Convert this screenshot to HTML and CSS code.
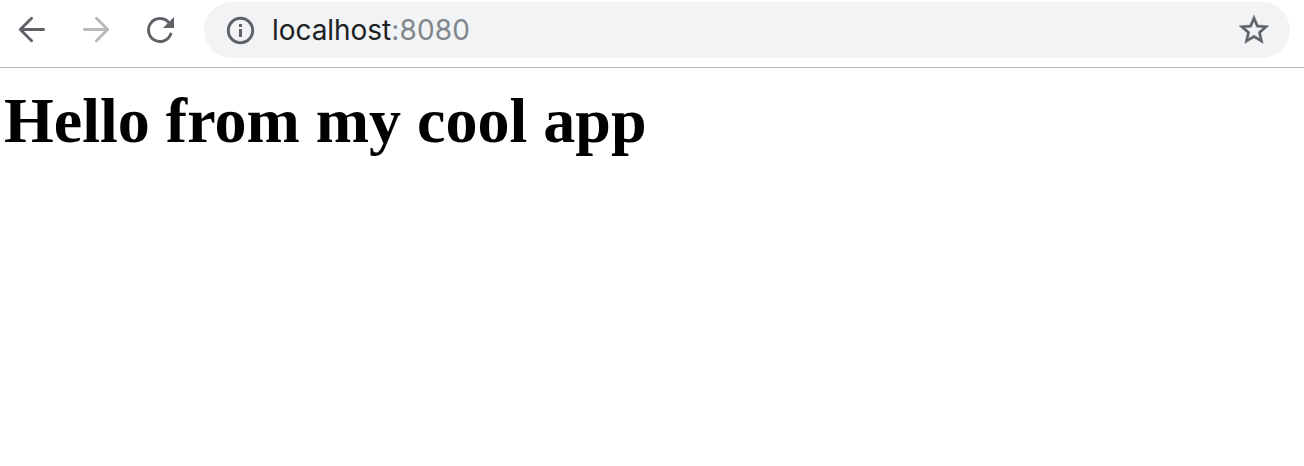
FILE: index.html
```html
<!DOCTYPE html>
<html lang="en">
<head>
<meta charset="utf-8">
<title>localhost:8080</title>
<link rel="stylesheet" href="styles.css">
</head>
<body>
<header class="toolbar">
  <nav class="nav">
    <svg class="icon" viewBox="0 0 32 32"><path class="line" d="M27.6 15.5H4.5M15.6 4.2L4.3 15.5 15.6 26.8"/></svg>
    <svg class="icon disabled" viewBox="0 0 32 32"><path class="line" d="M4.4 15.5H27.5M16.4 4.2L27.7 15.5 16.4 26.8"/></svg>
    <svg class="icon" viewBox="0 0 32 32"><path class="line" d="M24.5 8.2A11.5 11.5 0 1 0 26.8 20"/><path class="solid" d="M30 3v11H19z"/></svg>
  </nav>
  <div class="omnibox">
    <svg class="icon" viewBox="0 0 32 32"><circle class="line" cx="16.5" cy="16.5" r="12.2"/><path class="solid" d="M15 10h3v3h-3zM15 15h3v8h-3z"/></svg>
    <span class="url">localhost<span class="port">:8080</span></span>
    <svg class="star" viewBox="0 0 24 24"><path d="M22 9.24l-7.19-.62L12 2 9.19 8.63 2 9.24l5.46 4.73L5.82 21 12 17.27 18.18 21l-1.63-7.03L22 9.24zM12 15.4l-3.76 2.27 1-4.28-3.32-2.88 4.38-.38L12 6.1l1.71 4.04 4.38.38-3.32 2.88 1 4.28L12 15.4z"/></svg>
  </div>
</header>
<main class="page"><h1 class="title">Hello from my cool app</h1></main>
</body>
</html>
```
FILE: styles.css
```css
body { margin: 0; background: #fff; }
.toolbar { box-sizing: border-box; height: 68px; padding: 2px 14px 0 16px; display: flex; border-bottom: 1px solid #b6b6b6; }
.nav { display: flex; align-items: center; gap: 32px; width: 188px; height: 56px; }
.icon { width: 32px; height: 32px; flex: none; color: #5f6368; }
.disabled { color: #bababa; }
.line { fill: none; stroke: currentColor; stroke-width: 2.9; stroke-linecap: round; stroke-linejoin: round; }
.solid { fill: currentColor; }
.omnibox { box-sizing: border-box; flex: 1; height: 56px; padding: 0 18px 0 20px; display: flex; align-items: center; border-radius: 28px; background: #f1f3f4; }
.star { width: 36px; height: 36px; flex: none; fill: #5f6368; stroke: #5f6368; stroke-width: 0.2; }
.url { flex: 1; margin-left: 16px; font: 28px/56px Inter, Roboto, sans-serif; letter-spacing: -0.05px; color: #202124; }
.port { color: #80868b; letter-spacing: 0.15px; }
.page { padding: 17px 4px; }
.title { margin: 0; font: bold 64px/72px "Liberation Serif", serif; letter-spacing: 0.01px; color: #000; }
```
